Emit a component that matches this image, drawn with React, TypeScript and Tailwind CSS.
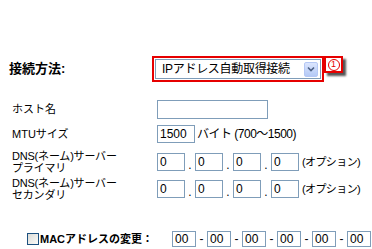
import React from "react";

const jp = { fontFamily: '"Liberation Sans", "Noto Sans CJK JP", sans-serif' };

function Box({ w, h, value }: { w: number; h: number; value?: string }) {
  return (
    <div
      className="shrink-0 border border-[#7f9db9] bg-white flex items-center pl-[2px] text-[12px] leading-none text-black"
      style={{ width: w, height: h }}
    >
      {value}
    </div>
  );
}

function IpRow() {
  const sep = (
    <span className="w-[10px] shrink-0 text-center self-end leading-none text-[12px]">.</span>
  );
  return (
    <div className="flex items-center h-[18px]">
      <Box w={28} h={18} value="0" />
      {sep}
      <Box w={28} h={18} value="0" />
      {sep}
      <Box w={28} h={18} value="0" />
      {sep}
      <Box w={28} h={18} value="0" />
      <span className="ml-[3px] text-[11px] leading-none tracking-[-0.6px]">(オプション)</span>
    </div>
  );
}

export default function App() {
  return (
    <div className="w-[372px] h-[249px] bg-white text-black relative overflow-hidden" style={jp}>
      {/* connection method row */}
      <div className="flex items-start pt-[56px] h-[82px]">
        <div className="w-[152px] pl-[9px] pt-[6px] font-bold text-[13px] leading-[14px]">接続方法:</div>
        <div className="border-2 border-[#e60000] p-[1px] w-[172px] h-[26px]">
          <div className="border border-[#7f9db9] bg-white h-[20px] flex items-center justify-between pl-[6px] pr-[2px]">
            <span className="text-[12px] leading-none tracking-[-0.3px]">IPアドレス自動取得接続</span>
            <div className="w-[14px] h-[15px] rounded-[2px] border border-[#b5c8f5] bg-gradient-to-b from-[#dbe5fd] to-[#b4c9f6] flex items-center justify-center">
              <svg width="8" height="6" viewBox="0 0 8 6">
                <path d="M1 1.5 L4 4.5 L7 1.5" stroke="#4d6185" strokeWidth="1.6" fill="none" />
              </svg>
            </div>
          </div>
        </div>
        <div className="w-[19px] h-[17px] border-2 border-[#e60000] bg-white flex items-center justify-center shadow-[3px_3px_2px_#555]">
          <span className="w-[12px] h-[12px] rounded-full border border-[#e60000] flex items-center justify-center text-[#e60000] text-[9px] leading-none">
            1
          </span>
        </div>
      </div>

      {/* host name */}
      <div className="flex items-center mt-[18px] h-[19px]">
        <div className="w-[157px] pl-[12px] text-[11px] leading-none">ホスト名</div>
        <Box w={111} h={19} />
      </div>

      {/* MTU */}
      <div className="flex items-center mt-[6px] h-[18px]">
        <div className="w-[157px] pl-[12px] text-[11px] leading-none">MTUサイズ</div>
        <Box w={38} h={18} value="1500" />
        <span className="ml-[2px] text-[12px] leading-none tracking-[-0.5px]">バイト (700〜1500)</span>
      </div>

      {/* DNS primary */}
      <div className="flex items-center mt-[7px] h-[24px]">
        <div className="w-[157px] pl-[12px] text-[11px] leading-[12px] tracking-[-0.2px]">
          DNS(ネーム)サーバー
          <br />
          プライマリ
        </div>
        <IpRow />
      </div>

      {/* DNS secondary */}
      <div className="flex items-center mt-[3px] h-[24px]">
        <div className="w-[157px] pl-[12px] text-[11px] leading-[12px] tracking-[-0.2px]">
          DNS(ネーム)サーバー
          <br />
          セカンダリ
        </div>
        <IpRow />
      </div>

      {/* MAC */}
      <div className="flex items-center mt-[30px] h-[16px]">
        <div className="w-[172px] pl-[27px] flex items-center">
          <div className="w-[12px] h-[12px] border border-[#1c5180] bg-gradient-to-br from-[#dcdcd7] to-[#fbfbf9]" />
          <span className="ml-[1px] font-bold text-[11px] leading-none">MACアドレスの変更：</span>
        </div>
        {[0, 1, 2, 3, 4, 5].map((i) => (
          <React.Fragment key={i}>
            {i > 0 && <span className="w-[11px] shrink-0 text-center text-[12px] leading-none">-</span>}
            <Box w={24} h={16} value="00" />
          </React.Fragment>
        ))}
      </div>
    </div>
  );
}
